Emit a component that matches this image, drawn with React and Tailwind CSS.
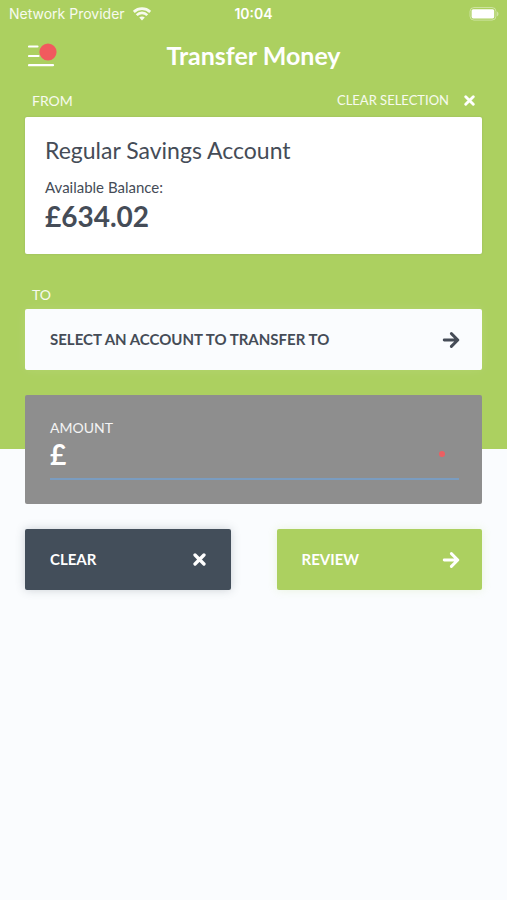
import React, { useState } from "react";

function ArrowIcon() {
  return (
    <svg viewBox="0 0 18 16" className="w-[18px] h-4 shrink-0" fill="none" stroke="currentColor" strokeWidth="2.9" strokeLinecap="round" strokeLinejoin="round" aria-hidden="true">
      <path d="M2.2 8H15.6M9.4 1.6 15.8 8l-6.4 6.4" />
    </svg>
  );
}

function CloseIcon({ className }) {
  return (
    <svg viewBox="0 0 14 14" className={className} fill="none" stroke="currentColor" strokeWidth="3.6" strokeLinecap="round" aria-hidden="true">
      <path d="M2.2 2.2l9.6 9.6M11.8 2.2l-9.6 9.6" />
    </svg>
  );
}

function WifiIcon() {
  return (
    <svg viewBox="0 0 18 14" className="w-[18px] h-[14px]" fill="none" stroke="currentColor" strokeWidth="2.7" aria-hidden="true">
      <path d="M.8 4.9C5.4.6 12.6.6 17.2 4.9" />
      <path d="M3.7 8.1c3-2.9 7.6-2.9 10.6 0" />
      <path d="M6.2 10.6c1.6-1.5 4-1.5 5.6 0L9 13.6z" fill="currentColor" stroke="none" />
    </svg>
  );
}

function BatteryIcon() {
  return (
    <svg viewBox="0 0 30 14" className="w-[30px] h-[14px]" aria-hidden="true">
      <rect x="1" y="0.5" width="26" height="12.6" rx="4" fill="none" stroke="#fff" strokeOpacity="0.4" />
      <rect x="2.6" y="2.2" width="22.6" height="9.2" rx="1.6" fill="#fff" />
      <path d="M28.2 4.5c1.6.7 1.6 4.1 0 4.8z" fill="#fff" fillOpacity="0.5" />
    </svg>
  );
}

function App() {
  const [account, setAccount] = useState({ name: "Regular Savings Account", balance: 634.02 });
  const [amount, setAmount] = useState("");

  return (
    <div className="min-h-screen bg-[#fafcfe] font-['Lato','Noto_Sans',sans-serif] text-[#454c57]">
      {/* Green top half */}
      <div className="bg-[#acd060] text-white pb-[79px]">
        {/* Status bar */}
        <div className="h-7 px-2 grid grid-cols-[1fr_auto_1fr] items-center font-['Inter',sans-serif] text-sm">
          <div className="flex items-center gap-2 pl-px text-white/90">
            <span>Network Provider</span>
            <WifiIcon />
          </div>
          <span className="font-semibold">10:04</span>
          <div className="flex justify-end">
            <BatteryIcon />
          </div>
        </div>

        <header className="h-14 px-7 grid grid-cols-[1fr_auto_1fr] items-center">
          <button type="button" aria-label="Open menu" className="w-8 h-7">
            <svg viewBox="0 0 32 28" className="w-8 h-7" aria-hidden="true">
              <path d="M1 4.5h8.5M1 14h9.5M1 23.2h24" stroke="#fff" strokeWidth="2.2" strokeLinecap="round" />
              <circle cx="20" cy="10" r="8.6" fill="#f15a5e" />
            </svg>
          </button>
          <h1 className="pb-0.5 text-[25px] leading-8 font-bold">Transfer Money</h1>
        </header>

        <main className="px-[25px]">
          <div className="h-[33px] px-[7px] flex items-center justify-between">
            <h2 className="text-sm text-white/90">FROM</h2>
            <button type="button" onClick={() => setAccount(null)} className="flex items-center gap-[15px] text-[13px] text-white/90">
              CLEAR SELECTION
              <CloseIcon className="w-[11px] h-[11px] text-white" />
            </button>
          </div>

          <section className="min-h-[137px] px-5 py-[19px] bg-white rounded-xs text-[#454c57] shadow-[0_0_2px_rgba(69,76,87,0.2)]">
            {account && (
              <>
                <h3 className="text-[23px] leading-7">{account.name}</h3>
                <p className="mt-[13px] text-[15px] leading-5">Available Balance:</p>
                <p className="text-[28px] leading-[38px] font-bold">£{account.balance.toFixed(2)}</p>
              </>
            )}
          </section>

          <h2 className="mt-[31px] mb-1 px-[7px] text-sm text-white/90">TO</h2>
          <button type="button" className="w-full h-[61px] pl-[25px] pr-[22px] flex items-center justify-between bg-[#fafcfe] rounded-xs text-[15px] font-bold text-[#454c57] shadow-[0_0_12px_rgba(255,255,255,0.1)]">
            SELECT AN ACCOUNT TO TRANSFER TO
            <ArrowIcon />
          </button>
        </main>
      </div>

      {/* Amount card overlaps the edge of the green */}
      <div className="px-[25px] -mt-[54px]">
        <section className="h-[109px] pl-[25px] pr-[23px] pt-[23px] bg-[#8e8e8e] rounded-xs text-white">
          <label htmlFor="amount" className="block text-sm text-white/90">
            AMOUNT
          </label>
          <div className="h-[42px] pb-2 flex items-center border-b-2 border-[#7a9cc0]">
            <span className="text-[28px] leading-8 font-bold">£</span>
            <input
              id="amount"
              type="text"
              inputMode="decimal"
              value={amount}
              onChange={(e) => setAmount(e.target.value)}
              className="min-w-0 h-8 flex-1 bg-transparent text-[28px] font-bold outline-none"
            />
            <span className="w-1.5 h-1.5 mr-3.5 rounded-full bg-[#ec5f62]" />
          </div>
        </section>

        <div className="mt-[25px] grid grid-cols-2 gap-[46px] text-[15px] font-bold text-white">
          <button
            type="button"
            onClick={() => setAmount("")}
            className="h-[61px] px-[25px] flex items-center justify-between bg-[#434e5a] rounded-xs shadow-[0_0_10px_rgba(67,78,90,0.25)]"
          >
            CLEAR
            <CloseIcon className="w-[13px] h-[13px]" />
          </button>
          <button type="button" className="h-[61px] pl-[25px] pr-[22px] flex items-center justify-between bg-[#acd060] rounded-xs shadow-[0_0_10px_rgba(172,208,96,0.2)]">
            REVIEW
            <ArrowIcon />
          </button>
        </div>
      </div>
    </div>
  );
}

export default App;
